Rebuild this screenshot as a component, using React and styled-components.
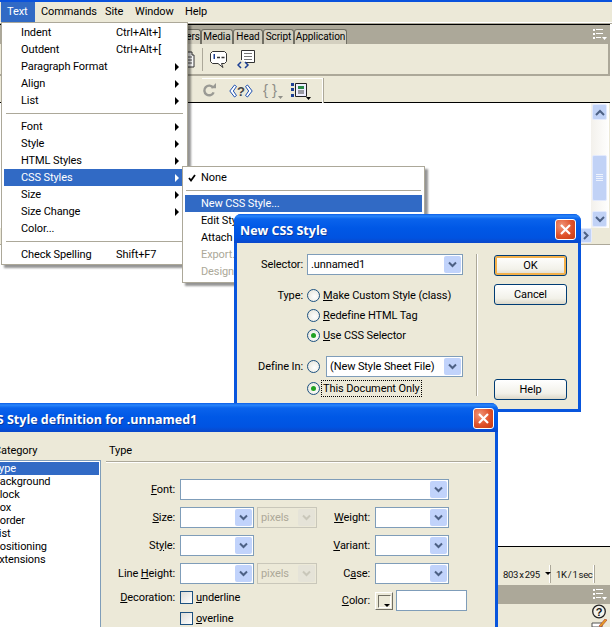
import React from 'react';
import styled, { createGlobalStyle, css } from 'styled-components';

const Global = createGlobalStyle`
  html, body { margin: 0; padding: 0; background: #fff; }
  body { font-family: Roboto, "Liberation Sans", Arial, sans-serif; font-size: 11px; letter-spacing: -0.1px; color: #000; }
`;

const Page = styled.div`
  position: relative; width: 612px; height: 627px; overflow: hidden; background: #fff;
  display: flex; flex-direction: column;
`;
const TopStrip = styled.div`height: 2px; background: #0a52dc;`;
const MenuBar = styled.div`
  height: 20px; background: #ece9d8; display: flex; align-items: center; padding-left: 1px;
  border-bottom: 1px solid #fff; box-shadow: 0 1px 0 #aca899;
`;
const MenuTitle = styled.div`
  height: 20px; line-height: 19px; padding-left: 6px; box-sizing: border-box; width: ${p => p.$w}px;
  ${p => p.$active && css`background: #316ac5; color: #fff;`}
`;
const Workspace = styled.div`
  margin: 1px 2px 0 0; flex: 1; display: flex; flex-direction: column; min-height: 0; background: #ece9d8;
`;
const TabStrip = styled.div`
  height: 19px; background: #aca899; border-top: 1px solid #000;
  display: flex; align-items: flex-end; padding-left: 170px; position: relative;
`;
const Tab = styled.div`
  height: 15px; line-height: 13px; background: #d4d0c0; box-sizing: border-box; font-size: 10px; letter-spacing: -0.05px;
  border: 1px solid #716f64; border-bottom: 0; border-radius: 3px 3px 0 0;
  width: ${p => p.$w}px; text-align: center; white-space: nowrap; flex: none;
`;
const PanelMenuIcon = styled.span`
  position: absolute; right: 3px; top: 3px; width: 14px; height: 12px; display: flex;
`;
const InsertBar = styled.div`
  height: 30px; background: #ece9d8; display: flex; align-items: center; padding-left: 185px; gap: 7px;
  border-right: 2px solid #aca899; border-bottom: 2px solid #aca899; margin-right: 0;
`;
const ToolRule = styled.div`
  width: 1px; height: 23px; background: #aca899;
`;
const ViewBar = styled.div`
  height: 26px; display: flex; align-items: center; padding-left: 202px; position: relative; background: #ece9d8;
  border-bottom: 1px solid #000;
`;
const ViewGroup = styled.div`
  width: 120px; height: 24px; margin-top: 2px; display: flex; align-items: center;
  border-right: 1px solid #fff; box-shadow: 1px 0 0 #aca899; border-top: 1px solid #fff;
`;
const ViewIcon = styled.svg`
  flex: none; margin-right: ${p => p.$mr}px;
`;
const DocPane = styled.div`
  height: 125px; background: #fff; display: flex; justify-content: flex-end; padding-right: 1px;
  border-right: 1px solid #ece9d8;
`;
const VScroll = styled.div`
  width: 17px; background: linear-gradient(90deg, #f3f1ec, #fefefd); display: flex; flex-direction: column;
  padding-top: 1px; position: relative;
`;
const ScrollBtn = styled.div`
  width: ${p => p.$w || 15}px; height: ${p => p.$h || 15}px; margin: ${p => p.$mt || 0}px ${p => p.$flat ? 0 : 1}px ${p => p.$mb || 0}px;
  background: #c1d2f6; border: 1px solid #e3eafd;
  border-radius: 2px; box-sizing: border-box; display: flex; align-items: center; justify-content: center;
`;
const ScrollEnd = styled(ScrollBtn)`margin-top: auto; margin-bottom: 1px;`;
const HScrollRow = styled.div`
  height: 16px; display: flex; justify-content: flex-end; padding-right: 18px; background: #ece9d8;
  border-bottom: 1px solid #aca899;
`;
const LowerDoc = styled.div`
  flex: 1; background: #fff; border-bottom: 1px solid #000; min-height: 0;
`;
const StatusBar = styled.div`
  height: 38px; background: #ece9d8; display: flex; align-items: flex-end; justify-content: flex-end;
  padding-bottom: 2px; box-sizing: border-box; padding-right: 16px; color: #111;
  font-size: 9.5px; letter-spacing: -0.3px; word-spacing: -1px;
`;
const StatusCell = styled.div`
  width: ${p => p.$w}px; box-sizing: border-box; flex: none;
  height: 18px; padding: 0 0 0 6px; border-right: 1px solid #fff; box-shadow: 1px 0 0 #aca899;
  display: flex; align-items: center; gap: 5px; white-space: nowrap;
  svg { flex: none; }
`;
const PanelHeader = styled.div`
  height: 19px; background: #aca899; position: relative;
`;
const HelpDock = styled.div`
  height: 23px; display: flex; flex-direction: column; align-items: flex-end; padding: 0 3px 0 0;
  background: #ece9d8;
  svg { flex: none; }
`;

const Menu = styled.div`
  position: absolute; left: ${p => p.$x}px; top: ${p => p.$y}px; width: ${p => p.$w}px; box-sizing: border-box;
  background: #fff; border: 1px solid #aca899; padding: ${p => p.$pad};
  box-shadow: 3px 3px 2px rgba(0,0,0,.42); z-index: ${p => p.$z};
`;
const MenuRow = styled.div`
  height: 17px; display: grid; grid-template-columns: ${p => p.$sub ? '1fr' : '95px 1fr 10px'}; align-items: center;
  white-space: nowrap; line-height: 17px; position: relative;
  padding-left: ${p => p.$sub ? 16 : 17}px;
  color: ${p => p.$off ? '#aca899' : '#000'};
  ${p => p.$on && css`background: #316ac5; color: #fff;`}
`;
const Arrow = styled.span`
  grid-column: 3; width: 0; height: 0; border-left: 4px solid currentColor;
  border-top: 4px solid transparent; border-bottom: 4px solid transparent; justify-self: start;
`;
const MenuSep = styled.div`
  height: 9px; display: flex; align-items: center;
  &::before { content: ''; flex: 1; height: 1px; margin: 0 ${p => p.$inset}px; background: #aca899; }
`;
const Check = styled.svg`position: absolute; left: 3px; top: 5px; width: 8px; height: 8px;`;

const Window = styled.div`
  position: absolute; left: ${p => p.$x}px; top: ${p => p.$y}px; width: ${p => p.$w}px; height: ${p => p.$h}px;
  box-sizing: border-box; z-index: ${p => p.$z}; border-radius: 7px 7px 0 0; overflow: hidden;
  background: #0855dd; display: flex; flex-direction: column;
`;
const TitleBar = styled.div`
  height: 29px; flex: none; display: flex; align-items: center; justify-content: space-between;
  padding: 3px ${p => p.$pr}px 0 ${p => p.$pl}px; box-sizing: border-box;
  background: linear-gradient(180deg, #0a5ce6 0, #2a86fa 2px, #0a63ec 5px, #0058e6 14px, #0053e1 24px, #0b47c9 29px);
  color: #fff; text-shadow: 1px 1px 0 #0a3a9c;
`;
const TitleText = styled.span`
  font-family: "Open Sans", "Liberation Sans", sans-serif; font-size: 12.5px; font-weight: 700; white-space: nowrap;
  letter-spacing: 0;
`;
const CloseBtn = styled.div`
  width: 21px; height: 21px; box-sizing: border-box; border: 1px solid #fff; border-radius: 3px;
  background: radial-gradient(circle at 30% 30%, #f0967a, #e0512a 55%, #c33a12);
  display: flex; align-items: center; justify-content: center; flex: none; margin-top: -1px;
`;
const WinBody = styled.div`
  flex: 1; background: #ece9d8; margin: 0 3px 3px; display: flex; min-height: 0; position: relative;
`;
const SmallLeft = styled.div`width: 236px; padding: 11px 0 0 0; box-sizing: border-box; flex: none;`;
const FormRow = styled.div`
  display: flex; align-items: center; height: ${p => p.$h || 20}px; margin-top: ${p => p.$mt || 0}px;
`;
const RowLabel = styled.label`
  width: 66px; text-align: right; margin-right: 4px; white-space: nowrap; flex: none;
`;
const Combo = styled.div`
  width: ${p => p.$w}px; height: 21px; box-sizing: border-box; flex: none;
  border: 1px solid ${p => p.$off ? '#c9c7ba' : '#7f9db9'}; background: ${p => p.$off ? '#ece9d8' : '#fff'};
  display: flex; align-items: center; justify-content: space-between; padding: 0 1px 0 3px;
  white-space: nowrap; color: ${p => p.$off ? '#aca899' : '#000'}; overflow: hidden;
`;
const ComboBtn = styled.div`
  width: 17px; height: 17px; background: ${p => p.$off ? '#e5e3d8' : '#c1d3fb'}; border-radius: 2px; flex: none;
  display: flex; align-items: center; justify-content: center;
`;
const TextBox = styled.div`
  width: ${p => p.$w}px; height: 21px; box-sizing: border-box; border: 1px solid #7f9db9; background: #fff; margin-top: -1px; flex: none;
`;
const Radio = styled.span`
  width: 13px; height: 13px; border-radius: 50%; box-sizing: border-box; border: 1px solid #1c5180; flex: none;
  background: radial-gradient(circle at 60% 60%, #fff, #e2e1d6);
  display: flex; align-items: center; justify-content: center; margin-right: ${p => p.$mr ?? 3}px;
  &::after { content: ''; display: ${p => p.$on ? 'block' : 'none'}; width: 5px; height: 5px; border-radius: 50%; background: #21a121; }
`;
const U = styled.span`text-decoration: underline;`;
const Focus = styled.span`outline: 1px dotted #000; outline-offset: 1px;`;
const VRule = styled.div`
  width: 1px; height: 142px; background: #aca899; border-right: 1px solid #fff; margin: 11px 0 0 3px; flex: none;
`;
const ButtonCol = styled.div`
  display: flex; flex-direction: column; padding: 12px 0 0 16px; gap: 8px;
`;
const Btn = styled.div`
  width: 73px; height: 21px; box-sizing: border-box; border: 1px solid #003c74; border-radius: 3px;
  background: linear-gradient(180deg, #fff, #f2f1e9 70%, #dcd8c9);
  display: flex; align-items: center; justify-content: center; margin-top: ${p => p.$mt || 0}px;
  ${p => p.$def && css`box-shadow: inset 0 0 0 2px #f3b04a;`}
`;

const CategoryCol = styled.div`width: 125px; flex: none; padding: 12px 0 0 0; box-sizing: border-box; position: relative;`;
const CatLabel = styled.div`margin-left: 19px; height: 15px; line-height: 13px; white-space: nowrap;`;
const CatList = styled.div`
  margin: 1px 0 0 14px; width: 112px; height: 200px; box-sizing: border-box;
  border: 1px solid #7f9db9; background: #fff; padding: 1px;
`;
const CatItem = styled.div`
  height: 13px; line-height: 14px; padding-left: 2px; white-space: nowrap;
  ${p => p.$on && css`background: #316ac5; color: #fff;`}
`;
const TypePane = styled.div`
  flex: 1; padding: 12px 4px 0 6px; min-width: 0;
`;
const PaneHead = styled.div`
  height: 17px; line-height: 13px; padding-left: 3px; border-bottom: 1px solid #aca899; box-shadow: 0 1px 0 #fff;
`;
const TypeGrid = styled.div`
  display: grid; margin-top: 17px;
  grid-template-columns: 74px 74px 63px 58px 74px;
  grid-auto-rows: 28px;
`;
const GridLabel = styled.label`
  text-align: right; padding-right: 5px; white-space: nowrap; height: 21px; line-height: ${p => p.$lh || 21}px;
`;
const FieldCell = styled.div`
  grid-column: span ${p => p.$span || 1}; display: flex; align-items: flex-start; padding-left: ${p => p.$pl || 0}px;
  gap: ${p => p.$gap || 0}px; position: relative;
`;
const CheckRow = styled.div`
  display: flex; align-items: center; gap: 3px; height: 13px; white-space: nowrap;
`;
const CheckBoxMark = styled.span`
  width: 13px; height: 13px; box-sizing: border-box; border: 1px solid #1c5180; flex: none;
  background: linear-gradient(135deg, #dcdcd7, #fff);
`;
const DecoStack = styled.div`display: flex; flex-direction: column; gap: 8px;`;
const Swatch = styled.div`
  width: 18px; height: 18px; box-sizing: border-box; flex: none; margin-top: 1px;
  border: 1px solid #fff; border-right-color: #716f64; border-bottom-color: #716f64; background: #ece9d8; position: relative;
  &::before { content: ''; position: absolute; left: 2px; top: 2px; width: 11px; height: 11px; border: 1px solid #716f64; border-right-color: #fff; border-bottom-color: #fff; }
  &::after { content: ''; position: absolute; right: 2px; bottom: 2px; border-left: 3px solid transparent; border-right: 3px solid transparent; border-top: 3px solid #000; }
`;

const Chevron = ({ off }) => (
  <svg width="9" height="7" viewBox="0 0 9 7"><path d="M1 1.5 L4.5 5 L8 1.5" fill="none" stroke={off ? '#c9c7ba' : '#4d6185'} strokeWidth="2" /></svg>
);
const ListIcon = () => (
  <svg viewBox="0 0 14 12" width="14" height="12">
    <path d="M0 1h2v2H0zM0 5h2v2H0zM0 9h2v2H0z" fill="#fff" />
    <path d="M3 1.500h7M3 5.500h7M3 9.500h5" stroke="#fff" strokeWidth="1" />
    <path d="M9 9h5l-2.500 3z" fill="#fff" />
  </svg>
);
const XIcon = () => (
  <svg width="11" height="11" viewBox="0 0 11 11"><path d="M1 1 L10 10 M10 1 L1 10" stroke="#fff" strokeWidth="2.2" /></svg>
);
const ComboField = ({ w, children, off }) => (
  <Combo $w={w} $off={off}>
    <span>{children}</span>
    <ComboBtn $off={off}><Chevron off={off} /></ComboBtn>
  </Combo>
);

const App = () => (
  <>
    <Global />
    <Page>
      <TopStrip />
      <MenuBar>
        <MenuTitle $active $w={34}>Text</MenuTitle>
        <MenuTitle $w={64}>Commands</MenuTitle>
        <MenuTitle $w={30}>Site</MenuTitle>
        <MenuTitle $w={50}>Window</MenuTitle>
        <MenuTitle $w={40}>Help</MenuTitle>
      </MenuBar>
      <Workspace>
        <TabStrip>
          <Tab $w={31}>Layers</Tab>
          <Tab $w={32}>Media</Tab>
          <Tab $w={30}>Head</Tab>
          <Tab $w={31}>Script</Tab>
          <Tab $w={53}>Application</Tab>
          <PanelMenuIcon><ListIcon /></PanelMenuIcon>
        </TabStrip>
        <InsertBar>
          <svg width="10" height="24" viewBox="0 0 10 24">
            <path d="M0 5h7v3h2v12H0z" fill="#fff" stroke="#333" />
            <path d="M2 10h5M2 13h5M2 16h5" stroke="#555" />
          </svg>
          <ToolRule />
          <svg width="18" height="19" viewBox="0 0 18 19">
            <path d="M2.500 1.500h12l2 2v8l-2 2h-3l1.500 4-5-4h-5.500l-2-2v-8z" fill="#fff" stroke="#333" />
            <path d="M3.500 4h1.500v5H3.500z" fill="#1c3f94" />
            <path d="M7 7.500h3M11.500 7.500h3" stroke="#333" strokeWidth="1.400" />
          </svg>
          <svg width="18" height="19" viewBox="0 0 18 19" style={{ marginLeft: 2 }}>
            <path d="M4.500 10V.5h13v12H9" fill="#fff" stroke="#333" />
            <path d="M7 3.500h8M7 6.500h8M7 9.500h8" stroke="#777" />
            <path d="M4 12L1 15l3 3M8 12l3 3-3 3" fill="none" stroke="#1c3f94" strokeWidth="1.500" />
          </svg>
        </InsertBar>
        <ViewBar>
          <ViewGroup>
            <ViewIcon $mr={13} width="14" height="15" viewBox="0 0 15 16">
              <path d="M12 5A5.200 5.200 0 1 0 12.500 10" fill="none" stroke="#9a9a94" strokeWidth="2.600" />
              <path d="M9.500 5.500h5.500V0z" fill="#9a9a94" />
            </ViewIcon>
            <ViewIcon $mr={10} width="24" height="14" viewBox="0 0 24 14">
              <path d="M5.500 1L.8 7l4.700 6 2-1.500L4.300 7l3.200-4.500z" fill="#fff" stroke="#1c4fb0" strokeWidth="1" />
              <path d="M18.500 1l4.700 6-4.700 6-2-1.500L19.700 7l-3.200-4.500z" fill="#fff" stroke="#1c4fb0" strokeWidth="1" />
              <text x="12" y="12" textAnchor="middle" fontFamily="Liberation Sans" fontWeight="bold" fontSize="13" fill="#444">?</text>
            </ViewIcon>
            <ViewIcon $mr={7} width="20" height="18" viewBox="0 0 20 18">
              <text x="0" y="13" fontFamily="Liberation Sans" fontSize="15" fill="#8f8f88">{'{'}</text>
              <text x="9" y="13" fontFamily="Liberation Sans" fontSize="15" fill="#8f8f88">{'}'}</text>
              <path d="M15 14h5l-2.500 3z" fill="#8f8f88" />
            </ViewIcon>
            <ViewIcon $mr={0} width="22" height="18" viewBox="0 0 22 18">
              <path d="M1 1h3v3H1zM1 6h3v3H1zM1 12h3v3H1z" fill="#1c3f94" />
              <path d="M5.500 1.500h11v13h-11z" fill="#eef" stroke="#222" />
              <path d="M8 4h6v3H8z" fill="#2a8a4a" />
              <path d="M8 9h6M8 11h6" stroke="#444" />
              <path d="M16 15h5l-2.500 3z" fill="#000" />
            </ViewIcon>
          </ViewGroup>
        </ViewBar>
        <DocPane>
          <VScroll>
            <ScrollBtn $h={16}>
              <svg width="10" height="7" viewBox="0 0 10 7"><path d="M1 6L5 2l4 4" fill="none" stroke="#4d6185" strokeWidth="2" /></svg>
            </ScrollBtn>
            <ScrollBtn $h={46} $mt={35}>
              <svg width="7" height="8" viewBox="0 0 7 8"><path d="M0 .5h7M0 2.500h7M0 4.500h7M0 6.500h7" stroke="#eef3fd" /></svg>
            </ScrollBtn>
            <ScrollEnd $h={16}>
              <svg width="10" height="7" viewBox="0 0 10 7"><path d="M1 1l4 4 4-4" fill="none" stroke="#4d6185" strokeWidth="2" /></svg>
            </ScrollEnd>
          </VScroll>
        </DocPane>
        <HScrollRow>
          <ScrollBtn $h={15} $w={12} $flat>
            <svg width="6" height="9" viewBox="0 0 6 9"><path d="M1 1l3.500 3.500L1 8" fill="none" stroke="#4d6185" strokeWidth="2" /></svg>
          </ScrollBtn>
        </HScrollRow>
        <LowerDoc />
        <StatusBar>
          <StatusCell $w={53}>
            <span>803 x 295</span>
            <svg width="6" height="4" viewBox="0 0 6 4"><path d="M0 0h6L3 3z" /></svg>
          </StatusCell>
          <StatusCell $w={44}>1K / 1 sec</StatusCell>
        </StatusBar>
        <PanelHeader>
          <PanelMenuIcon><ListIcon /></PanelMenuIcon>
        </PanelHeader>
        <HelpDock>
          <svg width="16" height="15" viewBox="0 0 16 15">
            <circle cx="8" cy="7.500" r="6.300" fill="#f4f3ec" stroke="#222" strokeWidth="1.300" />
            <text x="8" y="11.500" textAnchor="middle" fontFamily="Liberation Sans" fontWeight="bold" fontSize="11" fill="#111">?</text>
          </svg>
          <svg width="16" height="8" viewBox="0 0 16 8">
            <path d="M1 4h10v4H1z" fill="#fff" stroke="#555" />
            <path d="M8 7l6-7 2 1-6 7z" fill="#e8a020" stroke="#a33" strokeWidth=".6" />
          </svg>
        </HelpDock>
      </Workspace>

      <Menu $x={1} $y={22} $w={187} $pad="1px 2px 1px 2px" $z={3}>
        <MenuRow>Indent<span>Ctrl+Alt+]</span></MenuRow>
        <MenuRow>Outdent<span>Ctrl+Alt+[</span></MenuRow>
        <MenuRow>Paragraph Format<Arrow /></MenuRow>
        <MenuRow>Align<Arrow /></MenuRow>
        <MenuRow>List<Arrow /></MenuRow>
        <MenuSep $inset={2} />
        <MenuRow>Font<Arrow /></MenuRow>
        <MenuRow>Style<Arrow /></MenuRow>
        <MenuRow>HTML Styles<Arrow /></MenuRow>
        <MenuRow $on>CSS Styles<Arrow /></MenuRow>
        <MenuRow>Size<Arrow /></MenuRow>
        <MenuRow>Size Change<Arrow /></MenuRow>
        <MenuRow>Color...</MenuRow>
        <MenuSep $inset={2} />
        <MenuRow>Check Spelling<span>Shift+F7</span></MenuRow>
      </Menu>

      <Menu $x={182} $y={166} $w={243} $pad="2px" $z={4}>
        <MenuRow $sub>
          <Check viewBox="0 0 8 8"><path d="M1 4l2 2.500L7 1" fill="none" stroke="#000" strokeWidth="1.800" /></Check>
          None
        </MenuRow>
        <MenuSep $inset={1} />
        <MenuRow $sub $on>New CSS Style...</MenuRow>
        <MenuRow $sub>Edit Style Sheet...</MenuRow>
        <MenuRow $sub>Attach Style Sheet...</MenuRow>
        <MenuRow $sub $off>Export...</MenuRow>
        <MenuRow $sub $off>Design Time...</MenuRow>
      </Menu>

      <Window $x={234} $y={214} $w={347} $h={198} $z={5}>
        <TitleBar $pl={6} $pr={5}>
          <TitleText>New CSS Style</TitleText>
          <CloseBtn><XIcon /></CloseBtn>
        </TitleBar>
        <WinBody>
          <SmallLeft>
            <FormRow $h={21}>
              <RowLabel>Selector:</RowLabel>
              <ComboField w={156}>.unnamed1</ComboField>
            </FormRow>
            <FormRow $mt={10}>
              <RowLabel>Type:</RowLabel>
              <Radio /><span><U>M</U>ake Custom Style (class)</span>
            </FormRow>
            <FormRow>
              <RowLabel />
              <Radio /><span><U>R</U>edefine HTML Tag</span>
            </FormRow>
            <FormRow>
              <RowLabel />
              <Radio $on /><span><U>U</U>se CSS Selector</span>
            </FormRow>
            <FormRow $mt={11} $h={21}>
              <RowLabel>Define In:</RowLabel>
              <Radio $mr={6} />
              <ComboField w={137}>(New Style Sheet File)</ComboField>
            </FormRow>
            <FormRow $mt={1}>
              <RowLabel />
              <Radio $on /><Focus>This Document Only</Focus>
            </FormRow>
          </SmallLeft>
          <VRule />
          <ButtonCol>
            <Btn $def>OK</Btn>
            <Btn>Cancel</Btn>
            <Btn $mt={66}>Help</Btn>
          </ButtonCol>
        </WinBody>
      </Window>

      <Window $x={-28} $y={403} $w={526} $h={240} $z={6}>
        <TitleBar $pl={10} $pr={4}>
          <TitleText>CSS Style definition for .unnamed1</TitleText>
          <CloseBtn><XIcon /></CloseBtn>
        </TitleBar>
        <WinBody>
          <CategoryCol>
            <CatLabel>Category</CatLabel>
            <CatList>
              <CatItem $on>Type</CatItem>
              <CatItem>Background</CatItem>
              <CatItem>Block</CatItem>
              <CatItem>Box</CatItem>
              <CatItem>Border</CatItem>
              <CatItem>List</CatItem>
              <CatItem>Positioning</CatItem>
              <CatItem>Extensions</CatItem>
            </CatList>
          </CategoryCol>
          <TypePane>
            <PaneHead>Type</PaneHead>
            <TypeGrid>
              <GridLabel><U>F</U>ont:</GridLabel>
              <FieldCell $span={4}><ComboField w={269} /></FieldCell>

              <GridLabel><U>S</U>ize:</GridLabel>
              <FieldCell><ComboField w={74} /></FieldCell>
              <FieldCell $pl={3}><ComboField w={60} off>pixels</ComboField></FieldCell>
              <GridLabel><U>W</U>eight:</GridLabel>
              <FieldCell><ComboField w={74} /></FieldCell>

              <GridLabel>St<U>y</U>le:</GridLabel>
              <FieldCell $span={2}><ComboField w={74} /></FieldCell>
              <GridLabel><U>V</U>ariant:</GridLabel>
              <FieldCell><ComboField w={74} /></FieldCell>

              <GridLabel>Line <U>H</U>eight:</GridLabel>
              <FieldCell><ComboField w={74} /></FieldCell>
              <FieldCell $pl={3}><ComboField w={60} off>pixels</ComboField></FieldCell>
              <GridLabel>C<U>a</U>se:</GridLabel>
              <FieldCell><ComboField w={74} /></FieldCell>

              <GridLabel $lh={13}><U>D</U>ecoration:</GridLabel>
              <FieldCell $span={2}>
                <DecoStack>
                  <CheckRow><CheckBoxMark /><span><U>u</U>nderline</span></CheckRow>
                  <CheckRow><CheckBoxMark /><span><U>o</U>verline</span></CheckRow>
                </DecoStack>
              </FieldCell>
              <GridLabel $lh={19}><U>C</U>olor:</GridLabel>
              <FieldCell $gap={3}><Swatch /><TextBox $w={71} /></FieldCell>
            </TypeGrid>
          </TypePane>
        </WinBody>
      </Window>
    </Page>
  </>
);

export default App;
